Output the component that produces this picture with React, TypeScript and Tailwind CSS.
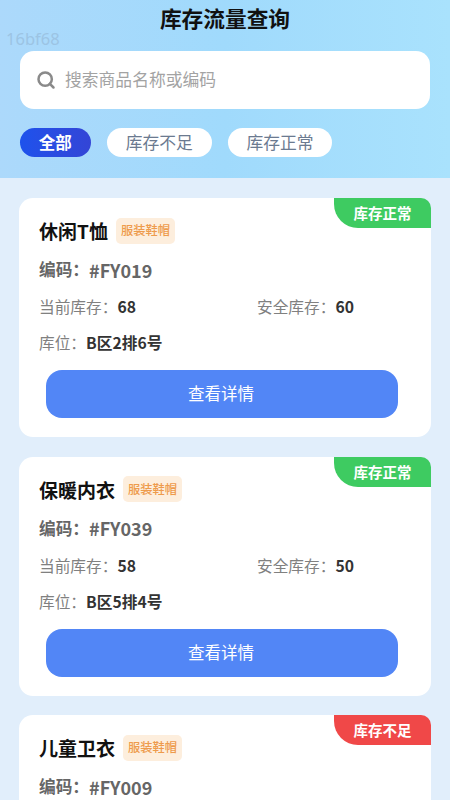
import { Search } from 'lucide-react'

type Item = { name: string; code: string; ok: boolean; stock?: number; safe?: number; place?: string }

// last card runs off the bottom of the page, only its top part is visible
const items: Item[] = [
  { name: '休闲T恤', code: '#FY019', stock: 68, safe: 60, place: 'B区2排6号', ok: true },
  { name: '保暖内衣', code: '#FY039', stock: 58, safe: 50, place: 'B区5排4号', ok: true },
  { name: '儿童卫衣', code: '#FY009', ok: false },
]

function Card({ item }: { item: Item }) {
  return (
    <div className="relative bg-white rounded-[14px] h-[239px] pl-5 pr-[33px] pt-[19px] shrink-0">
      <div
        className={`absolute right-0 top-0 w-[97px] h-[30px] rounded-tr-[10px] rounded-bl-[24px] flex items-center justify-center text-white text-[14.5px] font-semibold ${
          item.ok ? 'bg-[#3ecb61]' : 'bg-[#f04848]'
        }`}
      >
        {item.ok ? '库存正常' : '库存不足'}
      </div>
      <div className="flex items-center h-[27px] gap-[8px]">
        <span className="text-[19px] font-bold text-[#111] leading-none">{item.name}</span>
        <span className="h-[26px] w-[59px] rounded-[5px] bg-[#fdeedd] text-[#ee9b4c] text-[12.25px] flex items-center justify-center font-medium">
          服装鞋帽
        </span>
      </div>
      <div className="mt-[14px] h-[24px] flex items-center text-[16.7px] font-bold text-[#666]">
        编码：<span className="text-[18px]">{item.code}</span>
      </div>
      {item.place && (
        <>
          <div className="mt-[13px] h-[24px] grid grid-cols-[218px_1fr] items-center text-[15.7px] text-[#808080]">
            <div className="flex items-center">
              当前库存：<span className="font-bold text-[#333]">{item.stock}</span>
            </div>
            <div className="flex items-center">
              安全库存：<span className="font-bold text-[#333]">{item.safe}</span>
            </div>
          </div>
          <div className="mt-[12px] h-[24px] flex items-center text-[15.7px] text-[#808080]">
            库位：<span className="font-bold text-[#333]">{item.place}</span>
          </div>
          <button className="ml-[7px] mt-[15px] w-[352px] h-[48px] rounded-[16px] bg-[#5286f6] text-white text-[16.5px] flex items-center justify-center pb-[1px] pr-[2px]">
            查看详情
          </button>
        </>
      )}
    </div>
  )
}

export default function App() {
  return (
    <div className="relative w-[450px] h-[800px] overflow-hidden bg-[#e1eefb] font-['Noto_Sans_CJK_SC','Noto_Sans',sans-serif]">
      <div className="relative h-[178px] bg-gradient-to-r from-[#acd9fb] via-[#a0dafc] to-[#a9e2fd] px-5">
        <h1 className="h-[38px] flex items-center justify-center text-[21.7px] font-bold text-[#111] pb-[2px]">库存流量查询</h1>
        <span className="absolute left-[6px] top-[27px] text-[16.5px] text-[#9cc4e4] font-['Noto_Sans',sans-serif]">16bf68</span>
        <div className="mt-[13px] h-[58px] bg-white rounded-[14px] flex items-center pl-[16px] gap-[9px]">
          <Search size={20} strokeWidth={3} className="text-[#8a8a8a]" />
          <span className="text-[16.8px] text-[#a3a3a3]">搜索商品名称或编码</span>
        </div>
        <div className="mt-[19px] flex gap-[16.5px]">
          <span className="w-[70.5px] h-[29px] rounded-full bg-gradient-to-r from-[#1d52ec] to-[#3345d6] text-white text-[16.5px] font-semibold flex items-center justify-center">
            全部
          </span>
          <span className="w-[104.5px] h-[29px] rounded-full bg-white text-[#6b7a90] text-[16.8px] flex items-center justify-center">
            库存不足
          </span>
          <span className="w-[104px] h-[29px] rounded-full bg-white text-[#6b7a90] text-[16.8px] flex items-center justify-center">
            库存正常
          </span>
        </div>
      </div>
      <div className="px-[19px] pt-[20px] flex flex-col gap-[19.5px]">
        {items.map(item => (
          <Card key={item.code} item={item} />
        ))}
      </div>
    </div>
  )
}
